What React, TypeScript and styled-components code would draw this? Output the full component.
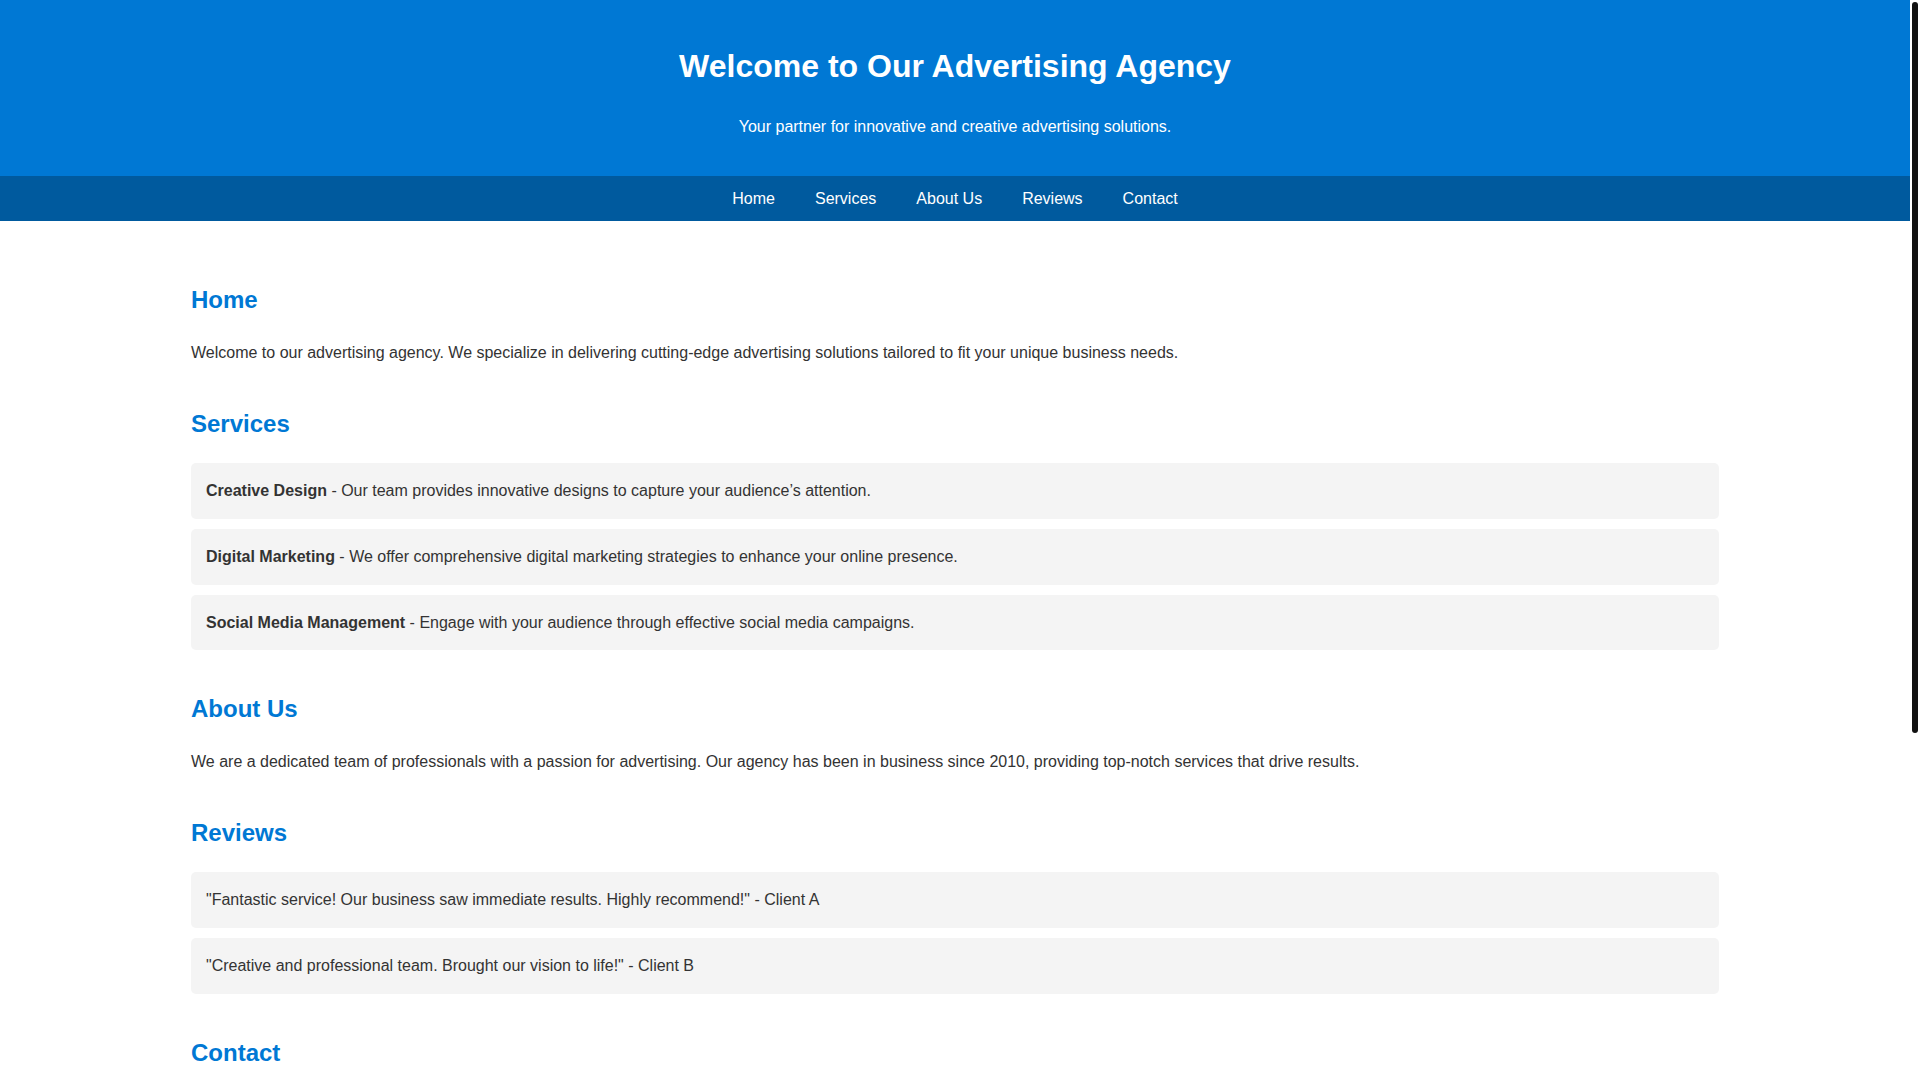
import React from "react";
import styled, { createGlobalStyle } from "styled-components";

const GlobalStyle = createGlobalStyle`
  body {
    margin: 0;
    font-family: "Liberation Sans", Arial, sans-serif;
    line-height: 1.6;
    color: #333;
    background: #fff;
  }
`;

// the screenshot shows a thin dark scrollbar; headless hides real ones
const ScrollTrack = styled.div`
  position: fixed;
  top: 0;
  right: 0;
  width: 10px;
  height: 100vh;
  background: #fff;
`;

const ScrollThumb = styled.div`
  margin: 2px 2px 0;
  width: 6px;
  height: 731px;
  background: #111;
  border-radius: 3px;
`;

const Page = styled.div`
  margin-right: 10px;
`;

const Header = styled.header`
  background: #0078d4;
  color: #fff;
  text-align: center;
  padding: 20px 0;
`;

const Title = styled.h1`
  font-size: 32px;
  margin: 21.44px 0;
`;

const Tagline = styled.p`
  margin: 16px 0;
  font-size: 16px;
`;

const Nav = styled.nav`
  background: #005a9e;
  padding: 10px 0;
  display: flex;
  justify-content: center;
`;

const NavLink = styled.a`
  color: #fff;
  text-decoration: none;
  padding: 0 20px;
  font-size: 16px;
`;

const Main = styled.main`
  width: 80%;
  margin: 0 auto;
  padding: 20px 0;
`;

const Section = styled.section``;

const Heading = styled.h2`
  color: #0078d4;
  font-size: 24px;
  margin: 40px 0 19.92px;
`;

const Text = styled.p`
  margin: 16px 0;
`;

const Card = styled.div`
  background: #f4f4f4;
  padding: 15px;
  border-radius: 5px;
  margin: 10px 0;
`;

const Form = styled.form`
  display: flex;
  flex-direction: column;
  gap: 12px;
`;

const Label = styled.label`
  font-weight: bold;
`;

const Input = styled.input`
  padding: 10px;
  border: 1px solid #ccc;
  border-radius: 5px;
  font-family: inherit;
  font-size: 16px;
`;

const TextArea = styled.textarea`
  padding: 10px;
  border: 1px solid #ccc;
  border-radius: 5px;
  font-family: inherit;
  font-size: 16px;
  height: 100px;
  resize: vertical;
`;

const Button = styled.button`
  align-self: flex-start;
  background: #0078d4;
  color: #fff;
  border: none;
  padding: 10px 20px;
  border-radius: 5px;
  font-size: 16px;
  font-family: inherit;
`;

const Footer = styled.footer`
  background: #005a9e;
  color: #fff;
  text-align: center;
  padding: 10px 0;
  margin-top: 20px;
`;

const links = ["Home", "Services", "About Us", "Reviews", "Contact"];

const services = [
  {
    name: "Creative Design",
    text: "Our team provides innovative designs to capture your audience\u2019s attention.",
  },
  {
    name: "Digital Marketing",
    text: "We offer comprehensive digital marketing strategies to enhance your online presence.",
  },
  {
    name: "Social Media Management",
    text: "Engage with your audience through effective social media campaigns.",
  },
];

const reviews = [
  '"Fantastic service! Our business saw immediate results. Highly recommend!" - Client A',
  '"Creative and professional team. Brought our vision to life!" - Client B',
];

export default function App() {
  return (
    <>
      <GlobalStyle />
      <Page>
        <Header>
          <Title>Welcome to Our Advertising Agency</Title>
          <Tagline>Your partner for innovative and creative advertising solutions.</Tagline>
        </Header>
        <Nav>
          {links.map((l) => (
            <NavLink key={l} href={`#${l.toLowerCase().replace(" ", "")}`}>
              {l}
            </NavLink>
          ))}
        </Nav>
        <Main>
          <Section id="home">
            <Heading>Home</Heading>
            <Text>
              Welcome to our advertising agency. We specialize in delivering cutting-edge
              advertising solutions tailored to fit your unique business needs.
            </Text>
          </Section>
          <Section id="services">
            <Heading>Services</Heading>
            {services.map((s) => (
              <Card key={s.name}>
                <strong>{s.name}</strong> - {s.text}
              </Card>
            ))}
          </Section>
          <Section id="aboutus">
            <Heading>About Us</Heading>
            <Text>
              We are a dedicated team of professionals with a passion for advertising. Our agency
              has been in business since 2010, providing top-notch services that drive results.
            </Text>
          </Section>
          <Section id="reviews">
            <Heading>Reviews</Heading>
            {reviews.map((r) => (
              <Card key={r}>{r}</Card>
            ))}
          </Section>
          <Section id="contact">
            <Heading>Contact</Heading>
            <Form onSubmit={(e) => e.preventDefault()}>
              <Label htmlFor="name">Name:</Label>
              <Input id="name" type="text" />
              <Label htmlFor="email">Email:</Label>
              <Input id="email" type="email" />
              <Label htmlFor="message">Message:</Label>
              <TextArea id="message" />
              <Button type="submit">Send</Button>
            </Form>
          </Section>
        </Main>
        <Footer>&copy; 2024 Advertising Agency. All rights reserved.</Footer>
      </Page>
      <ScrollTrack>
        <ScrollThumb />
      </ScrollTrack>
    </>
  );
}
